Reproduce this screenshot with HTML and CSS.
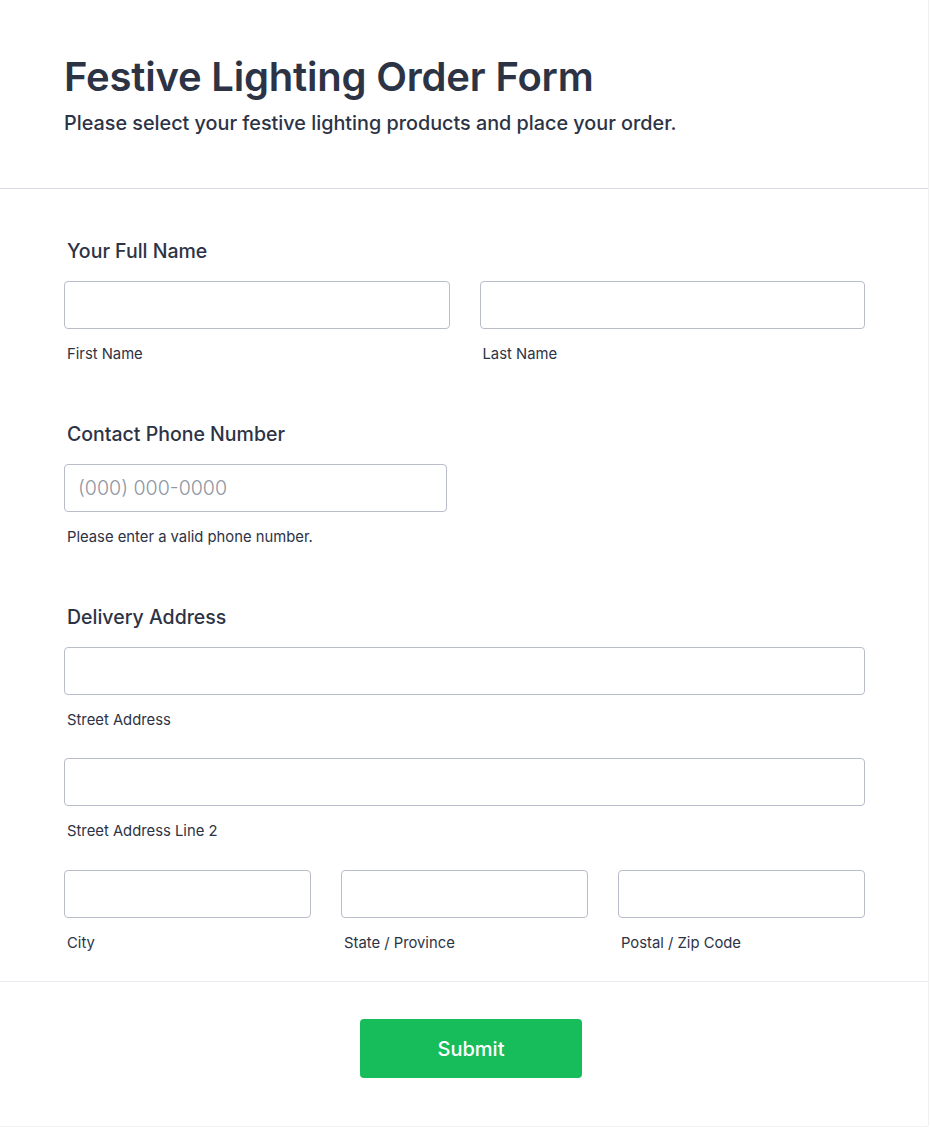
FILE: index.html
```html
<!DOCTYPE html>
<html lang="en">
<head>
<meta charset="utf-8">
<title>Festive Lighting Order Form</title>
<link rel="stylesheet" href="styles.css">
</head>
<body>
<div class="card">
  <header class="form-header">
    <h1 class="title">Festive Lighting Order Form</h1>
    <p class="subtitle">Please select your festive lighting products and place your order.</p>
  </header>
  <form class="form-body">
    <div class="group">
      <div class="label">Your Full Name</div>
      <div class="row two">
        <div class="cell">
          <input class="input" type="text">
          <div class="sublabel">First Name</div>
        </div>
        <div class="cell">
          <input class="input" type="text">
          <div class="sublabel">Last Name</div>
        </div>
      </div>
    </div>
    <div class="group">
      <div class="label">Contact Phone Number</div>
      <div class="cell phone">
        <input class="input" type="text" placeholder="(000) 000-0000">
        <div class="sublabel">Please enter a valid phone number.</div>
      </div>
    </div>
    <div class="group last">
      <div class="label">Delivery Address</div>
      <div class="cell">
        <input class="input" type="text">
        <div class="sublabel">Street Address</div>
      </div>
      <div class="cell spaced">
        <input class="input" type="text">
        <div class="sublabel">Street Address Line 2</div>
      </div>
      <div class="row three spaced-more">
        <div class="cell">
          <input class="input" type="text">
          <div class="sublabel">City</div>
        </div>
        <div class="cell">
          <input class="input" type="text">
          <div class="sublabel">State / Province</div>
        </div>
        <div class="cell">
          <input class="input" type="text">
          <div class="sublabel">Postal / Zip Code</div>
        </div>
      </div>
    </div>
  </form>
  <div class="footer">
    <button class="submit" type="button">Submit</button>
  </div>
</div>
</body>
</html>
```

FILE: styles.css
```css
* { box-sizing: border-box; }
html, body { margin: 0; padding: 0; background: #ffffff; }
body {
  font-family: Inter, "Noto Sans", "Liberation Sans", sans-serif;
  color: #2c3345;
}
.card {
  width: 929px;
  height: 1127px;
  border-right: 1px solid #f1f1f5;
  border-bottom: 1px solid #f1f1f5;
  border-bottom-right-radius: 3px;
  background: #fff;
}
.form-header {
  padding: 53px 64px 53px;
  border-bottom: 1px solid #d9dbe8;
}
.title {
  margin: 0;
  font-size: 40px;
  line-height: 48px;
  font-weight: 600;
  letter-spacing: -0.2px;
  color: #2c3345;
}
.subtitle {
  margin: 10px 0 0;
  font-size: 19.8px;
  line-height: 24px;
  font-weight: 500;
  color: #2c3345;
}
.form-body {
  padding: 50px 63px 28px 64px;
  border-bottom: 1px solid #e9eaf1;
}
.group { margin-bottom: 58px; }
.group.last { margin-bottom: 0; }
.label {
  font-size: 19.5px;
  line-height: 24px;
  font-weight: 500;
  padding-left: 3px;
  margin-bottom: 18px;
}
.row { display: grid; gap: 30px; }
.row.two { grid-template-columns: 1fr 1fr; }
.row.three { grid-template-columns: 1fr 1fr 1fr; }
.cell { display: flex; flex-direction: column; }
.cell.phone { width: 383px; }
.spaced { margin-top: 28px; }
.spaced-more { margin-top: 29px; }
.input {
  display: block;
  width: 100%;
  height: 48px;
  margin: 0;
  border: 1px solid #b8bdc9;
  border-radius: 4px;
  background: #fff;
  padding: 0 13px;
  font-family: Inter, "Noto Sans", "Liberation Sans", sans-serif;
  font-size: 19.6px;
  color: #2c3345;
  outline: none;
}
.input::placeholder { color: #8f96a3; font-weight: 300; }
.sublabel {
  margin-top: 15px;
  font-size: 14.8px;
  line-height: 20px;
  padding-left: 3px;
  color: #2c3345;
}
.footer {
  display: flex;
  justify-content: center;
  padding-top: 37px;
}
.submit {
  width: 222px;
  height: 59px;
  border: none;
  border-radius: 4px;
  background: #18bd5b;
  color: #fff;
  font-family: Inter, "Noto Sans", "Liberation Sans", sans-serif;
  font-size: 20px;
  font-weight: 500;
  cursor: pointer;
  margin-left: 14px;
}
```
